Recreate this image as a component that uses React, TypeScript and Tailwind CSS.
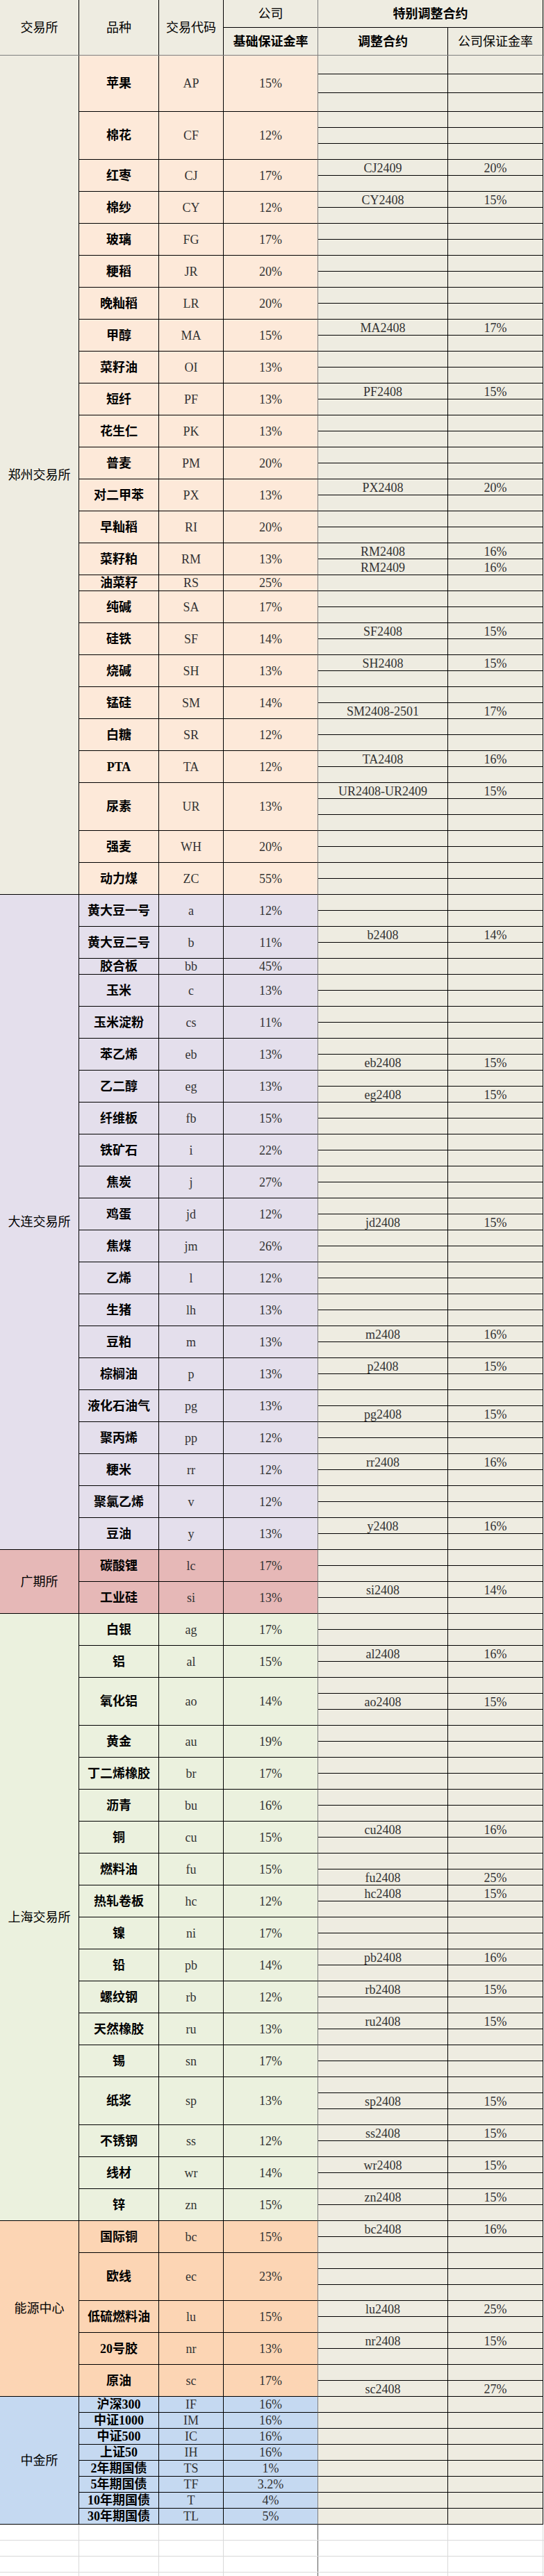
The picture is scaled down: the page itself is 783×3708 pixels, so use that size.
import React from 'react';

type Adj = [string, string] | null;
type Product = { name: string; code: string; rate: string; adj: Adj[]; tall?: boolean };
type Group = { name: string; exBg: string; bg: string; products: Product[] };

const e: Adj = null;
const a = (c: string, r: string): Adj => [c, r];
const p = (name: string, code: string, rate: string, adj: Adj[], tall = false): Product => ({ name, code, rate, adj, tall });

const groups: Group[] = [
  {
    name: '郑州交易所',
    exBg: 'bg-[#eeece1]',
    bg: 'bg-[#fde9d9]',
    products: [
      p('苹果', 'AP', '15%', [e, e, e], true),
      p('棉花', 'CF', '12%', [e, e, e]),
      p('红枣', 'CJ', '17%', [a('CJ2409', '20%'), e]),
      p('棉纱', 'CY', '12%', [a('CY2408', '15%'), e]),
      p('玻璃', 'FG', '17%', [e, e]),
      p('粳稻', 'JR', '20%', [e, e]),
      p('晚籼稻', 'LR', '20%', [e, e]),
      p('甲醇', 'MA', '15%', [a('MA2408', '17%'), e]),
      p('菜籽油', 'OI', '13%', [e, e]),
      p('短纤', 'PF', '13%', [a('PF2408', '15%'), e]),
      p('花生仁', 'PK', '13%', [e, e]),
      p('普麦', 'PM', '20%', [e, e]),
      p('对二甲苯', 'PX', '13%', [a('PX2408', '20%'), e]),
      p('早籼稻', 'RI', '20%', [e, e]),
      p('菜籽粕', 'RM', '13%', [a('RM2408', '16%'), a('RM2409', '16%')]),
      p('油菜籽', 'RS', '25%', [e]),
      p('纯碱', 'SA', '17%', [e, e]),
      p('硅铁', 'SF', '14%', [a('SF2408', '15%'), e]),
      p('烧碱', 'SH', '13%', [a('SH2408', '15%'), e]),
      p('锰硅', 'SM', '14%', [e, a('SM2408-2501', '17%')]),
      p('白糖', 'SR', '12%', [e, e]),
      p('PTA', 'TA', '12%', [a('TA2408', '16%'), e]),
      p('尿素', 'UR', '13%', [a('UR2408-UR2409', '15%'), e, e]),
      p('强麦', 'WH', '20%', [e, e]),
      p('动力煤', 'ZC', '55%', [e, e]),
    ],
  },
  {
    name: '大连交易所',
    exBg: 'bg-[#e4dfec]',
    bg: 'bg-[#e4dfec]',
    products: [
      p('黄大豆一号', 'a', '12%', [e, e]),
      p('黄大豆二号', 'b', '11%', [a('b2408', '14%'), e]),
      p('胶合板', 'bb', '45%', [e]),
      p('玉米', 'c', '13%', [e, e]),
      p('玉米淀粉', 'cs', '11%', [e, e]),
      p('苯乙烯', 'eb', '13%', [e, a('eb2408', '15%')]),
      p('乙二醇', 'eg', '13%', [e, a('eg2408', '15%')]),
      p('纤维板', 'fb', '15%', [e, e]),
      p('铁矿石', 'i', '22%', [e, e]),
      p('焦炭', 'j', '27%', [e, e]),
      p('鸡蛋', 'jd', '12%', [e, a('jd2408', '15%')]),
      p('焦煤', 'jm', '26%', [e, e]),
      p('乙烯', 'l', '12%', [e, e]),
      p('生猪', 'lh', '13%', [e, e]),
      p('豆粕', 'm', '13%', [a('m2408', '16%'), e]),
      p('棕榈油', 'p', '13%', [a('p2408', '15%'), e]),
      p('液化石油气', 'pg', '13%', [e, a('pg2408', '15%')]),
      p('聚丙烯', 'pp', '12%', [e, e]),
      p('粳米', 'rr', '12%', [a('rr2408', '16%'), e]),
      p('聚氯乙烯', 'v', '12%', [e, e]),
      p('豆油', 'y', '13%', [a('y2408', '16%'), e]),
    ],
  },
  {
    name: '广期所',
    exBg: 'bg-[#e6b8b7]',
    bg: 'bg-[#e6b8b7]',
    products: [
      p('碳酸锂', 'lc', '17%', [e, e]),
      p('工业硅', 'si', '13%', [a('si2408', '14%'), e]),
    ],
  },
  {
    name: '上海交易所',
    exBg: 'bg-[#ebf1de]',
    bg: 'bg-[#ebf1de]',
    products: [
      p('白银', 'ag', '17%', [e, e]),
      p('铝', 'al', '15%', [a('al2408', '16%'), e]),
      p('氧化铝', 'ao', '14%', [e, a('ao2408', '15%'), e]),
      p('黄金', 'au', '19%', [e, e]),
      p('丁二烯橡胶', 'br', '17%', [e, e]),
      p('沥青', 'bu', '16%', [e, e]),
      p('铜', 'cu', '15%', [a('cu2408', '16%'), e]),
      p('燃料油', 'fu', '15%', [e, a('fu2408', '25%')]),
      p('热轧卷板', 'hc', '12%', [a('hc2408', '15%'), e]),
      p('镍', 'ni', '17%', [e, e]),
      p('铅', 'pb', '14%', [a('pb2408', '16%'), e]),
      p('螺纹钢', 'rb', '12%', [a('rb2408', '15%'), e]),
      p('天然橡胶', 'ru', '13%', [a('ru2408', '15%'), e]),
      p('锡', 'sn', '17%', [e, e]),
      p('纸浆', 'sp', '13%', [e, a('sp2408', '15%'), e]),
      p('不锈钢', 'ss', '12%', [a('ss2408', '15%'), e]),
      p('线材', 'wr', '14%', [a('wr2408', '15%'), e]),
      p('锌', 'zn', '15%', [a('zn2408', '15%'), e]),
    ],
  },
  {
    name: '能源中心',
    exBg: 'bg-[#fcd5b4]',
    bg: 'bg-[#fcd5b4]',
    products: [
      p('国际铜', 'bc', '15%', [a('bc2408', '16%'), e]),
      p('欧线', 'ec', '23%', [e, e, e]),
      p('低硫燃料油', 'lu', '15%', [a('lu2408', '25%'), e]),
      p('20号胶', 'nr', '13%', [a('nr2408', '15%'), e]),
      p('原油', 'sc', '17%', [e, a('sc2408', '27%')]),
    ],
  },
  {
    name: '中金所',
    exBg: 'bg-[#c5d9f1]',
    bg: 'bg-[#c5d9f1]',
    products: [
      p('沪深300', 'IF', '16%', [e]),
      p('中证1000', 'IM', '16%', [e]),
      p('中证500', 'IC', '16%', [e]),
      p('上证50', 'IH', '16%', [e]),
      p('2年期国债', 'TS', '1%', [e]),
      p('5年期国债', 'TF', '3.2%', [e]),
      p('10年期国债', 'T', '4%', [e]),
      p('30年期国债', 'TL', '5%', [e]),
    ],
  },
];

const SubRow = ({ row, tall }: { row: Adj; tall?: boolean }) => (
  <div className={`flex border-b border-black bg-[#eeece1] ${tall ? 'h-[27px]' : 'h-[23px]'}`}>
    <div className="w-[187px] shrink-0 border-r border-black flex items-end justify-center leading-[19px] text-[#333]">
      {row?.[0]}
    </div>
    <div className="w-[137px] shrink-0 border-r border-black flex items-end justify-center leading-[19px] text-[#333]">
      {row?.[1]}
    </div>
  </div>
);

const ProductRow = ({ item, bg }: { item: Product; bg: string }) => (
  <div className="flex">
    <div className={`w-[115px] shrink-0 border-r border-b border-black flex items-center justify-center font-bold text-black ${bg}`}>
      {item.name}
    </div>
    <div className={`w-[93px] shrink-0 border-r border-b border-black flex items-center justify-center text-[#333] ${bg}`}>
      {item.code}
    </div>
    <div className={`w-[136px] shrink-0 border-r border-b border-r-[#7f7f7f] border-b-black flex items-center justify-center text-[#333] ${bg}`}>
      {item.rate}
    </div>
    <div className="flex flex-col">
      {item.adj.map((row, i) => (
        <SubRow key={i} row={row} tall={item.tall} />
      ))}
    </div>
  </div>
);

const Header = () => (
  <div className="flex h-[80px] bg-[#eeece1] border-b border-[#7f7f7f] text-black">
    <div className="w-[114px] shrink-0 border-r border-black flex items-center justify-center">交易所</div>
    <div className="w-[115px] shrink-0 border-r border-black flex items-center justify-center">品种</div>
    <div className="w-[93px] shrink-0 border-r border-black flex items-center justify-center">交易代码</div>
    <div className="w-[136px] shrink-0 border-r border-[#7f7f7f] flex flex-col">
      <div className="h-[40px] border-b border-black flex items-center justify-center">公司</div>
      <div className="flex-1 flex items-center justify-center font-semibold">基础保证金率</div>
    </div>
    <div className="w-[324px] shrink-0 flex flex-col">
      <div className="h-[40px] border-b border-r border-black flex items-center justify-center font-semibold">特别调整合约</div>
      <div className="flex-1 flex">
        <div className="w-[187px] shrink-0 border-r border-black flex items-center justify-center font-semibold">调整合约</div>
        <div className="w-[137px] shrink-0 border-r border-black flex items-center justify-center">公司保证金率</div>
      </div>
    </div>
  </div>
);

const EmptyRow = () => (
  <div className="flex h-[23px] border-b border-[#d9d9d9]">
    <div className="w-[114px] shrink-0 border-r border-[#d9d9d9]" />
    <div className="w-[115px] shrink-0 border-r border-[#d9d9d9]" />
    <div className="w-[93px] shrink-0 border-r border-[#d9d9d9]" />
    <div className="w-[136px] shrink-0 border-r border-[#595959]" />
    <div className="w-[187px] shrink-0 border-r border-[#d9d9d9]" />
    <div className="w-[137px] shrink-0 border-r border-[#d9d9d9]" />
  </div>
);

export default function App() {
  return (
    <div className="w-[783px] h-[3708px] overflow-hidden bg-white text-[18px] leading-none font-['Liberation_Serif','Noto_Sans_CJK_SC',serif]">
      <Header />
      {groups.map((g) => (
        <div key={g.name} className="flex">
          <div className={`w-[114px] shrink-0 border-r border-b border-black flex items-center justify-center text-black ${g.exBg}`}>
            {g.name}
          </div>
          <div className="flex flex-col">
            {g.products.map((item) => (
              <ProductRow key={item.code} item={item} bg={g.bg} />
            ))}
          </div>
        </div>
      ))}
      <EmptyRow />
      <EmptyRow />
      <EmptyRow />
      <EmptyRow />
    </div>
  );
}
